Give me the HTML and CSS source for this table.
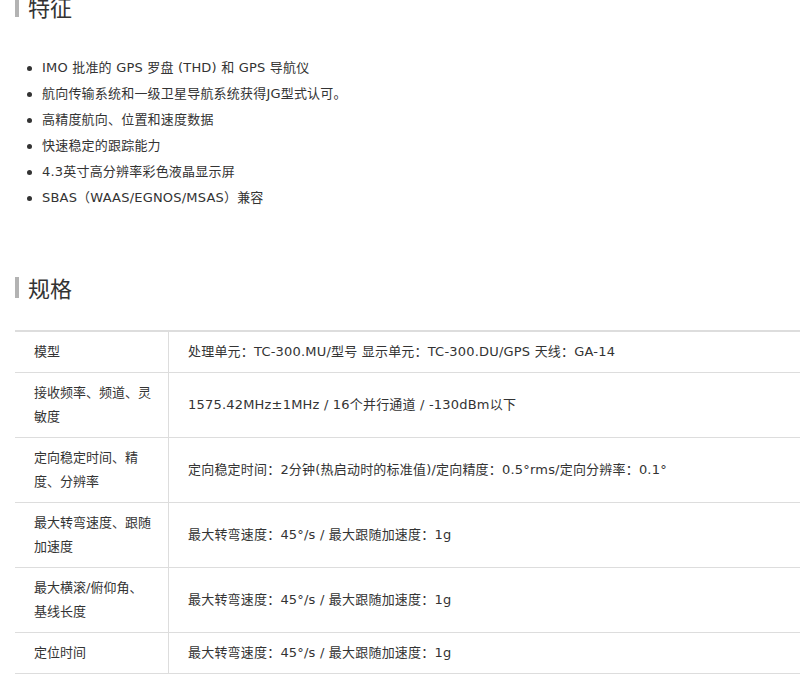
FILE: index.html
```html
<!DOCTYPE html>
<html lang="zh-CN">
<head>
    <meta charset="utf-8">
    <title>特征 / 规格</title>
    <meta name="viewport" content="width=device-width, initial-scale=1.0">
    <link rel="stylesheet" href="styles.css">
</head>
<body>

    <div class="page">

        <!-- Features -->
        <section class="features">
            <h2 class="section-title">特征</h2>
            <ul class="feature-list">
                <li>IMO 批准的 GPS 罗盘 (THD) 和 GPS 导航仪</li>
                <li>航向传输系统和一级卫星导航系统获得JG型式认可。</li>
                <li>高精度航向、位置和速度数据</li>
                <li>快速稳定的跟踪能力</li>
                <li>4.3英寸高分辨率彩色液晶显示屏</li>
                <li>SBAS（WAAS/EGNOS/MSAS）兼容</li>
            </ul>
        </section>

        <!-- Specs -->
        <section class="specs">
            <h2 class="section-title">规格</h2>
            <table class="spec-table">
                <tr>
                    <td class="spec-label">模型</td>
                    <td class="spec-value">处理单元：TC-300.MU/型号 显示单元：TC-300.DU/GPS 天线：GA-14</td>
                </tr>
                <tr>
                    <td class="spec-label">接收频率、频道、灵敏度</td>
                    <td class="spec-value">1575.42MHz±1MHz / 16个并行通道 / -130dBm以下</td>
                </tr>
                <tr>
                    <td class="spec-label">定向稳定时间、精度、分辨率</td>
                    <td class="spec-value">定向稳定时间：2分钟(热启动时的标准值)/定向精度：0.5°rms/定向分辨率：0.1°</td>
                </tr>
                <tr>
                    <td class="spec-label">最大转弯速度、跟随加速度</td>
                    <td class="spec-value">最大转弯速度：45°/s / 最大跟随加速度：1g</td>
                </tr>
                <tr>
                    <td class="spec-label">最大横滚/俯仰角、基线长度</td>
                    <td class="spec-value">最大转弯速度：45°/s / 最大跟随加速度：1g</td>
                </tr>
                <tr>
                    <td class="spec-label">定位时间</td>
                    <td class="spec-value">最大转弯速度：45°/s / 最大跟随加速度：1g</td>
                </tr>
            </table>
        </section>

    </div>

</body>
</html>
```

FILE: styles.css
```css
body {
    margin: 0;
    color: #333;
    font-family: "DejaVu Sans", "Noto Sans CJK JP", sans-serif;
    font-size: 13px;
    background: #fff;
    overflow-x: hidden;
}

.page {
    width: 985px;
    padding-left: 15px;
}

/* Section headings */
.section-title {
    margin: 0;
    padding-left: 9px;
    border-left: 4px solid #b3b3b3;
    font-family: "Noto Sans CJK JP", sans-serif;
    font-size: 22px;
    font-weight: normal;
    line-height: 21px;
    color: #333;
}

.features .section-title {
    margin-top: -4px;
}

.specs {
    margin-top: 66px;
}

/* Feature list */
.feature-list {
    list-style: none;
    margin: 38px 0 0;
    padding: 0;
}

.feature-list li {
    display: flex;
    align-items: center;
    line-height: 26px;
    letter-spacing: 0.2px;
}

.feature-list li::before {
    content: "";
    width: 5px;
    height: 5px;
    border-radius: 50%;
    background: #333;
    margin: 0 10px 0 12px;
    flex-shrink: 0;
}

/* Spec table */
.spec-table {
    width: 100%;
    margin-top: 32px;
    border-collapse: separate;
    border-spacing: 0;
}

.spec-table td {
    padding: 8px 14px 8px 19px;
    line-height: 24px;
    border-bottom: 1px solid #ddd;
    vertical-align: middle;
}

.spec-table tr:first-child td {
    border-top: 2px solid #ddd;
}

.spec-label {
    width: 120px;
}

.spec-value {
    border-left: 1px solid #ddd;
    letter-spacing: 0.2px;
}
```
